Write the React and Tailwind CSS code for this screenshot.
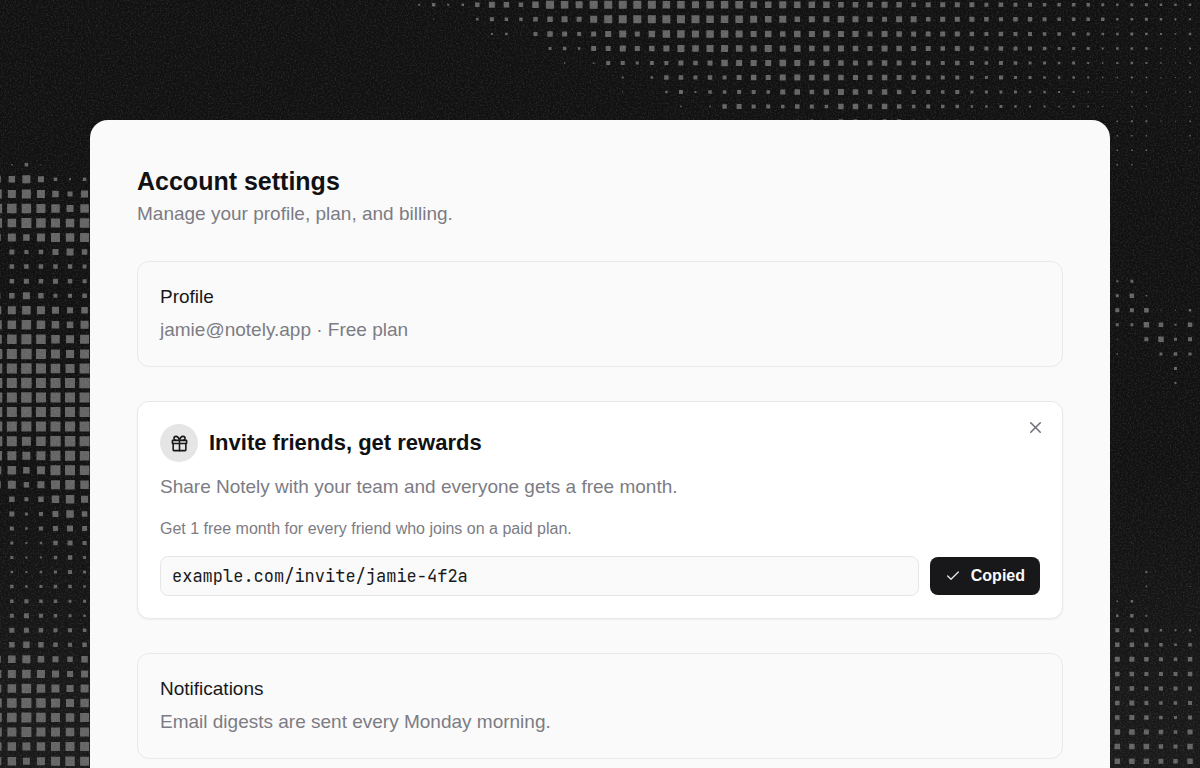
import { Check, X } from "lucide-react";

const PITCH = 160 / 11;
const ORIGIN_X = -2.7;
const ORIGIN_Y = 4.8;

// Halftone cells: [row, first column, one base-36 digit per cell giving its side in half units].
const RUNS = [
  [0, 29, "47459cb9dgfegggggffefffddedddbbbcb9aaaa898877776566555"],
  [1, 29, "020058779bcaegggggggfffedebccdcbacc9aaa9899877775565445"],
  [2, 34, "4518ba8aceadffeffecdbdcdccacbaaaa9898877765565435"],
  [3, 38, "675aacabcedeedcecdbccbacbaa9a9898876664555324"],
  [4, 39, "30388688a9adcccdcbcbaaba99898787665643454323"],
  [5, 43, "41599898abaccbcbaaba98887686655543343223"],
  [6, 43, "20058477887ab9bcb9b988786666554432233123"],
  [7, 47, "3139a887987bb9b978775565443432132002"],
  [8, 51, "40056758868866464000000000344223"],
  [9, 77, "333013"],
  [10, 77, "333012"],
  [11, 77, "331001"],
  [12, 77, "110001"],
  [11, 0, "0372000"],
  [12, 0, "edgc747"],
  [13, 0, "igigdae"],
  [14, 0, "jjjiheh"],
  [15, 0, "jhkjihj"],
  [16, 0, "egdgihi"],
  [17, 0, "0a89ceb"],
  [18, 0, "0999998"],
  [19, 0, "09a9a98"],
  [20, 0, "cbeb889"],
  [21, 0, "gghgecd"],
  [22, 0, "ihjhfdg"],
  [23, 0, "ijkjhgi"],
  [24, 0, "kklkigi"],
  [25, 0, "kklkjik"],
  [26, 0, "kklkkkl"],
  [27, 0, "kklkkkk"],
  [28, 0, "kklkkkk"],
  [29, 0, "kkkkkkk"],
  [30, 0, "kkijllk"],
  [31, 0, "jigikkj"],
  [32, 0, "ghdgkkj"],
  [33, 0, "egbeijh"],
  [34, 0, "0b8bfhe"],
  [35, 0, "0a68cfb"],
  [36, 0, "0858aca"],
  [37, 0, "06459a8"],
  [38, 0, "0644796"],
  [39, 0, "0545686"],
  [40, 0, "0756775"],
  [41, 0, "0787766"],
  [42, 0, "08a8765"],
  [43, 0, "0aa9887"],
  [44, 0, "0bdb989"],
  [45, 0, "efgdcbd"],
  [46, 0, "gghgece"],
  [47, 0, "ghjhgeg"],
  [48, 0, "ijkjigh"],
  [49, 0, "ijkjihi"],
  [50, 0, "iikiihi"],
  [51, 0, "hhghiii"],
  [52, 0, "ghegiji"],
  [19, 77, "460000"],
  [20, 77, "693000"],
  [21, 77, "889225"],
  [22, 77, "66b949"],
  [23, 77, "208b68"],
  [24, 77, "301676"],
  [25, 77, "000060"],
  [26, 77, "000040"],
  [37, 77, "020000"],
  [39, 77, "004002"],
  [40, 77, "003102"],
  [41, 77, "350000"],
  [42, 77, "574011"],
  [43, 77, "888545"],
  [44, 77, "998757"],
  [45, 77, "aa9879"],
  [46, 77, "998889"],
  [47, 77, "998888"],
  [48, 77, "9a8778"],
  [49, 77, "9a9768"],
  [50, 77, "bba97a"],
  [51, 77, "bbb98b"],
  [52, 77, "bbba9b"],
];

const HALFTONE = RUNS.map(([row, start, digits]) =>
  [...digits]
    .map((digit, i) => {
      const side = parseInt(digit, 36) / 2;
      if (side === 0) return "";
      const x = ORIGIN_X + (start + i) * PITCH - side / 2;
      const y = ORIGIN_Y + row * PITCH - side / 2;
      return `M${x.toFixed(2)} ${y.toFixed(2)}h${side}v${side}h${-side}z`;
    })
    .join("")
).join("");

function Backdrop() {
  return (
    <svg
      aria-hidden="true"
      viewBox="0 0 1200 768"
      preserveAspectRatio="xMidYMid slice"
      className="fixed inset-0 h-full w-full"
    >
      <defs>
        <linearGradient id="base" x1="0" y1="0" x2="0" y2="1">
          <stop offset="0" stopColor="#111111" />
          <stop offset="0.6" stopColor="#111111" />
          <stop offset="1" stopColor="#191919" />
        </linearGradient>
        <filter id="grain" x="0" y="0" width="100%" height="100%">
          <feTurbulence type="fractalNoise" baseFrequency="0.6" numOctaves="3" seed="4" />
          <feColorMatrix values="0 0 0 0 1  0 0 0 0 1  0 0 0 0 1  0.6 0 0 0 -0.26" />
        </filter>
      </defs>
      <rect width="1200" height="768" fill="url(#base)" />
      <path d={HALFTONE} fill="#646464" />
      <rect width="1200" height="768" filter="url(#grain)" opacity="0.4" />
    </svg>
  );
}

function GiftIcon() {
  return (
    <svg
      aria-hidden="true"
      viewBox="0 0 24 24"
      width="19"
      height="19"
      fill="none"
      stroke="currentColor"
      strokeWidth="2"
      strokeLinecap="round"
      strokeLinejoin="round"
    >
      <rect x="3" y="8" width="18" height="4" rx="0.5" />
      <path d="M12 8v13" />
      <path d="M20 12v8a1 1 0 0 1-1 1H5a1 1 0 0 1-1-1v-8" />
      <path d="M7.5 8a2.5 2.5 0 0 1 0-5A4.8 8 0 0 1 12 8a4.8 8 0 0 1 4.5-5 2.5 2.5 0 0 1 0 5" />
    </svg>
  );
}

function SettingsCard({ title, children }) {
  return (
    <section className="rounded-xl border border-[#e8e8ea] px-[22px] pt-5 pb-[22px]">
      <h2 className="text-[19px] leading-[29px] text-[#18181b]">{title}</h2>
      <p className="mt-1 text-[19px] leading-[29px] text-[#7c7c84]">{children}</p>
    </section>
  );
}

function InviteCard() {
  return (
    <section className="relative rounded-xl border border-[#e8e8ea] bg-white p-[22px] shadow-[0_1px_2px_rgba(0,0,0,0.05)]">
      <button
        type="button"
        aria-label="Dismiss"
        className="absolute top-[15px] right-4 p-px text-[#71717a]"
      >
        <X size={19} strokeWidth={2} />
      </button>
      <div className="flex items-center gap-[11px]">
        <span className="flex size-[38px] items-center justify-center rounded-full bg-[#e5e5e6] text-[#18181b]">
          <GiftIcon />
        </span>
        <h2 className="text-[22px] leading-[30px] font-bold text-[#111113]">
          Invite friends, get rewards
        </h2>
      </div>
      <p className="mt-[10px] text-[19px] leading-[29px] text-[#7c7c84]">
        Share Notely with your team and everyone gets a free month.
      </p>
      <p className="mt-4 text-base leading-[24px] text-[#7c7c84]">
        Get 1 free month for every friend who joins on a paid plan.
      </p>
      <div className="mt-[15px] flex items-center gap-[11px]">
        <input
          readOnly
          aria-label="Invite link"
          defaultValue="example.com/invite/jamie-4f2a"
          className="h-[40px] min-w-0 flex-1 rounded-lg border border-[#e6e6e8] bg-[#fafafa] px-[11px] font-['JetBrains_Mono','DejaVu_Sans_Mono',monospace] text-[17px] text-[#18181b] outline-none"
        />
        <button
          type="button"
          className="flex h-[38px] items-center gap-[10px] rounded-lg bg-[#18181a] px-[15px] text-base font-bold text-[#fafafa]"
        >
          <Check size={16} strokeWidth={2} className="text-[#e4e4e7]" />
          Copied
        </button>
      </div>
    </section>
  );
}

export default function App() {
  return (
    <div className="h-screen overflow-y-auto bg-[#131313] font-['Liberation_Sans',Arial,sans-serif] [scrollbar-width:none]">
      <Backdrop />
      <main className="relative mx-[90px] mt-[120px] rounded-[18px] bg-[#fafafa] px-[47px] pt-[44px] pb-12">
        <h1 className="text-[25px] leading-[34px] font-bold text-[#111113]">Account settings</h1>
        <p className="mt-px text-[19px] leading-[29px] text-[#7c7c84]">
          Manage your profile, plan, and billing.
        </p>
        <div className="mt-[33px] flex flex-col gap-[34px]">
          <SettingsCard title="Profile">jamie@notely.app · Free plan</SettingsCard>
          <InviteCard />
          <SettingsCard title="Notifications">
            Email digests are sent every Monday morning.
          </SettingsCard>
        </div>
      </main>
    </div>
  );
}
